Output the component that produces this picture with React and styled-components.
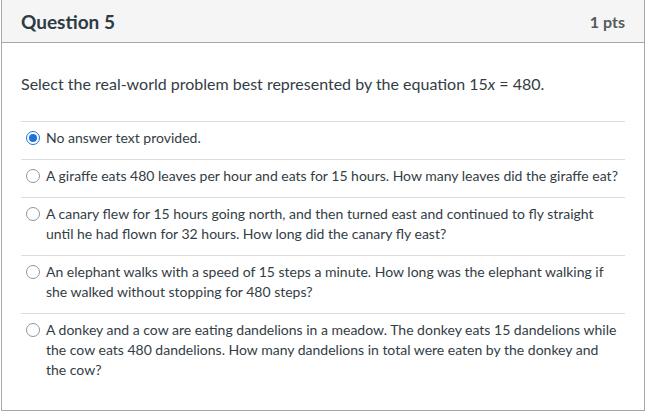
import React from "react";
import styled, { createGlobalStyle } from "styled-components";

const Global = createGlobalStyle`
  html, body { margin: 0; padding: 0; background: #ffffff; }
  body { font-family: Lato, "Open Sans", "Liberation Sans", sans-serif; color: #2d3b45; }
`;

const Card = styled.div`
  box-sizing: border-box;
  width: 644px;
  height: 412px;
  margin: -1px 0 0 1px;
  border: 1px solid #a8a8a8;
  background: #ffffff;
  display: flex;
  flex-direction: column;
`;

const Header = styled.div`
  box-sizing: border-box;
  height: 43px;
  padding: 1px 19px 0 19px;
  background: #f5f5f5;
  border-bottom: 1px solid #a8a8a8;
  display: flex;
  align-items: center;
  justify-content: space-between;
`;

const Title = styled.div`
  font-size: 19px;
  font-weight: 700;
  color: #2d3b45;
`;

const Points = styled.div`
  font-size: 16px;
  font-weight: 700;
  color: #565a5c;
`;

const Body = styled.div`
  padding: 29px 19px 0 19px;
`;

const Prompt = styled.p`
  margin: 0 0 25px 0;
  font-size: 16px;
  line-height: 24px;
  color: #333d45;
  em { font-style: italic; }
`;

const AnswerList = styled.div`
  display: flex;
  flex-direction: column;
`;

const Answer = styled.label`
  display: flex;
  align-items: flex-start;
  gap: 6px;
  padding: 6px 5px 11px 5px;
  border-top: 1px solid #dcdcdc;
  font-size: 14px;
  line-height: 20px;
  color: #333d45;
`;

const Radio = styled.span`
  box-sizing: border-box;
  flex: 0 0 auto;
  width: 14px;
  height: 14px;
  margin-top: 3px;
  border-radius: 50%;
  border: ${(p) => (p.$checked ? "1.5px solid #1f72d6" : "1px solid #949494")};
  background: #ffffff;
  display: flex;
  align-items: center;
  justify-content: center;
  &::after {
    content: "";
    display: ${(p) => (p.$checked ? "block" : "none")};
    width: 8px;
    height: 8px;
    border-radius: 50%;
    background: #1f72d6;
  }
`;

const AnswerText = styled.span`
  flex: 1 1 auto;
`;

const answers = [
  { text: "No answer text provided.", checked: true },
  { text: "A giraffe eats 480 leaves per hour and eats for 15 hours. How many leaves did the giraffe eat?" },
  { text: "A canary flew for 15 hours going north, and then turned east and continued to fly straight until he had flown for 32 hours. How long did the canary fly east?" },
  { text: "An elephant walks with a speed of 15 steps a minute. How long was the elephant walking if she walked without stopping for 480 steps?" },
  { text: "A donkey and a cow are eating dandelions in a meadow. The donkey eats 15 dandelions while the cow eats 480 dandelions. How many dandelions in total were eaten by the donkey and the cow?" },
];

export default function App() {
  return (
    <>
      <Global />
      <Card>
        <Header>
          <Title>Question 5</Title>
          <Points>1 pts</Points>
        </Header>
        <Body>
          <Prompt>
            Select the real-world problem best represented by the equation 15<em>x</em> = 480.
          </Prompt>
          <AnswerList>
            {answers.map((a, i) => (
              <Answer key={i}>
                <Radio $checked={!!a.checked} />
                <AnswerText>{a.text}</AnswerText>
              </Answer>
            ))}
          </AnswerList>
        </Body>
      </Card>
    </>
  );
}
